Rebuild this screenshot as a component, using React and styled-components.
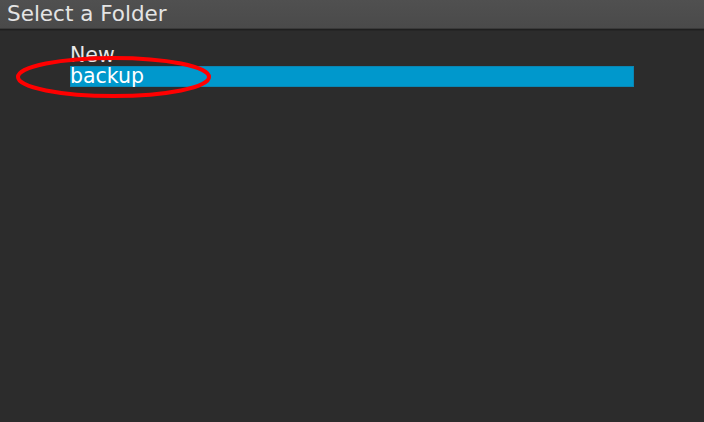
import React from "react";
import styled, { createGlobalStyle } from "styled-components";

const Global = createGlobalStyle`
  html, body { margin: 0; padding: 0; background: #2c2c2c; }
  body { width: 704px; height: 422px; overflow: hidden; }
`;

const Screen = styled.div`
  position: relative;
  width: 704px;
  height: 422px;
  background: #2c2c2c;
  font-family: "DejaVu Sans", "Liberation Sans", sans-serif;
  display: flex;
  flex-direction: column;
`;

const TitleBar = styled.div`
  height: 28px;
  background: linear-gradient(#505050, #4a4a4a);
  border-bottom: 1px solid #3a3a3a;
  box-shadow: 0 1px 0 #1f1f1f, 0 2px 0 #262626;
  display: flex;
  align-items: center;
  padding-left: 7px;
  color: #e4e4e4;
  font-size: 21.5px;
  line-height: 28px;
`;

const List = styled.div`
  display: flex;
  flex-direction: column;
  padding: 16px 70px 0 70px;
`;

const Row = styled.div`
  box-sizing: border-box;
  height: 21px;
  width: 564px;
  line-height: 21px;
  font-size: 20.5px;
  color: ${(p) => (p.$selected ? "#ffffff" : "#e8e8e8")};
  background: ${(p) => (p.$selected ? "#0098cc" : "transparent")};
  border: 1px solid ${(p) => (p.$selected ? "#0a86b4" : "transparent")};
  display: flex;
  align-items: center;
  white-space: nowrap;
`;

const Label = styled.span`
  margin-left: -1px;
`;

const Annotation = styled.svg`
  position: absolute;
  left: 0;
  top: 0;
  pointer-events: none;
`;

export default function App() {
  return (
    <Screen>
      <Global />
      <TitleBar>Select a Folder</TitleBar>
      <List>
        <Row>
          <Label>New</Label>
        </Row>
        <Row $selected>
          <Label>backup</Label>
        </Row>
      </List>
      <Annotation width="704" height="422">
        <ellipse cx="113.5" cy="77" rx="95.5" ry="19" fill="none" stroke="#ff0000" strokeWidth="4" />
      </Annotation>
    </Screen>
  );
}
